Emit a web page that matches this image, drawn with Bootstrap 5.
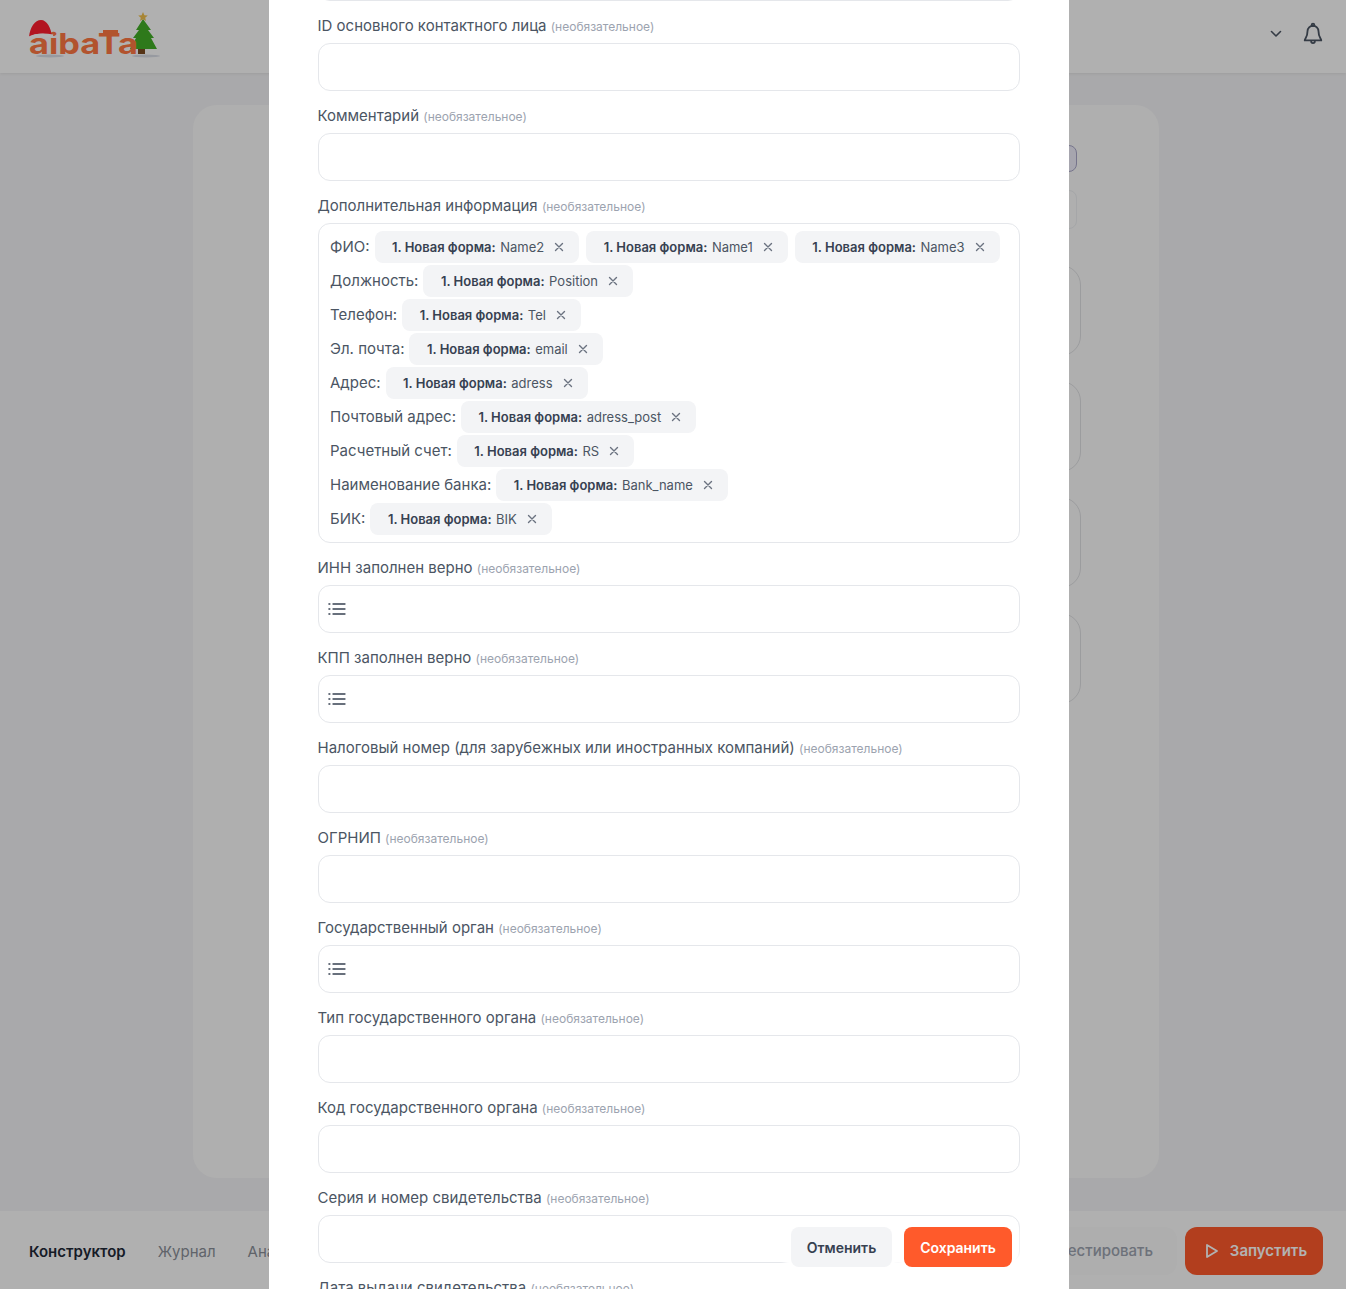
<!DOCTYPE html>
<html lang="ru">
<head>
    <meta charset="UTF-8">
    <meta name="viewport" content="width=device-width, initial-scale=1">
    <title>Albato</title>
    <link href="https://cdn.jsdelivr.net/npm/bootstrap@5.3.0/dist/css/bootstrap.min.css" rel="stylesheet">
    <style>
        body { font-family: Inter, "Noto Sans", sans-serif; background: #f3f3f5; overflow: hidden; }
        .app-shell { height: 100vh; }
        .top-bar { height: 73px; flex: none; background: #fdfdfd; padding: 0 22px 5px 28px; box-shadow: 0 1px 3px rgba(0,0,0,.08); }
        .logo-mark { margin-top: 2px; }
        .work-area { padding: 32px 187px 32px 193px; min-height: 0; }
        .work-panel { background: #fbfbfb; border-radius: 24px; padding: 40px 78px 0 0; }
        .side-col { width: 600px; }
        .side-tab { height: 27px; border-radius: 8px; border: 1px solid #a9a7c8; background: #eeecfa; margin-bottom: 18px; margin-right: 4px; }
        .side-input { height: 39px; border-radius: 8px; border: 1px solid #eceef1; margin-bottom: 36px; margin-right: 4px; }
        .side-card { height: 91px; border-radius: 20px; border: 1px solid #dfe0e3; margin-bottom: 25px; }
        .bottom-bar { height: 79px; flex: none; background: #fdfdfd; padding: 2px 23px 0 29px; border-top: 1px solid #f3f3f5; }
        .tab-list { padding-top: 2px; }
        .tab-item { font-size: 15px; color: #8a8f98; margin-right: 32px; }
        .tab-item.active-tab { color: #1f2937; font-weight: 600; }
        .test-btn { height: 48px; width: 200px; border-radius: 12px; background: #f9f9f9; border: 0; color: #9ca3af; font-size: 15px; font-weight: 500; text-align: right; padding-right: 24px; }
        .run-btn { height: 48px; width: 138px; border-radius: 12px; background: #ff5a2b; border: 0; color: #fff; font-size: 15px; font-weight: 600; gap: 11px; padding: 0 0 0 4px; }
        .dim-layer { position: fixed; inset: 0; background: rgba(0,0,0,.3); }
        .modal-sheet { position: fixed; top: 0; bottom: 0; left: 269px; width: 800px; background: #fff; padding: 0 49px 0 49px; overflow: hidden; }
        .field-row { margin-bottom: 13px; }
        .field-row:first-child { margin-top: -47px; }
        .field-label { display: block; height: 24px; font-size: 15px; line-height: 24px; margin: 0 0 5px -.5px; color: #4b5563; }
        .field-label small { font-size: 12px; color: #9ca3af; }
        .field-box { height: 48px; border: 1px solid #e5e7eb; border-radius: 12px; padding: 0 9px; display: flex; align-items: center; }
        .field-box.field-tags { height: 320px; display: block; padding: 6px 11px; }
        .tag-line { display: flex; flex-wrap: wrap; align-items: center; height: 34px; padding-top: 1px; font-size: 15px; color: #4b5563; }
        .tag-chip { display: inline-flex; align-items: center; height: 32px; margin-top: -1px; padding: 1px 15px 0 17.500px; border-radius: 8px; background: #f3f4f6; margin-left: 5px; margin-right: 2px; font-size: 13px; color: #4b5563; }
        .tag-chip b { font-weight: 600; color: #374151; margin-right: 4.500px; }
        .tag-chip svg { margin-left: 10px; margin-top: -1px; }
        .sheet-actions { position: absolute; right: 57px; bottom: 22px; gap: 12px; }
        .sheet-actions .btn { height: 40px; border-radius: 8px; border: 0; font-size: 14px; font-weight: 600; box-shadow: 0 0 5px 7px #fff; }
        .btn-cancel { width: 101px; background: #f3f4f6; color: #374151; }
        .btn-save { width: 108px; background: #ff5a2b; color: #fff; }
        .btn-cancel:hover { background: #f3f4f6; color: #374151; }
        .btn-save:hover { background: #ff5a2b; color: #fff; }
    </style>
</head>
<body>
    <div class="app-shell d-flex flex-column">
        <header class="top-bar d-flex align-items-center justify-content-between">
            <svg class="logo-mark" width="132" height="50" viewBox="0 0 132 50" role="img" aria-label="albato">
                <ellipse cx="22" cy="46" rx="14" ry="1.500" fill="#d8dde6"/>
                <ellipse cx="118" cy="46" rx="14" ry="1.500" fill="#d8dde6"/>
                <rect x="110" y="38" width="7" height="6" fill="#7a4a20"/>
                <path d="M115 9l8 11h-3l6 8h-3l6 11h-27l6-11h-3l6-8h-3z" fill="#42ae28"/>
                <path d="M115 2l1.400 3.200 3.400.3-2.600 2.200.8 3.300-3-1.800-3 1.800.8-3.300-2.600-2.200 3.400-.3z" fill="#f0bf4c"/>
                <text x="1" y="44" font-family="Inter, sans-serif" font-weight="700" font-size="29" fill="#ff7743" textLength="109" lengthAdjust="spacingAndGlyphs">aibaTa</text>
                <rect x="75" y="20" width="15" height="3" fill="#ff7743"/>
                <path d="M1 27C2 17 7 10 13 10c6 0 10 8 11 16l-7-2c-6-1-11 0-16 3z" fill="#ff1e2e"/>
                <path d="M1 28c6-3 13-4 24-2" stroke="#fff" stroke-width="3" fill="none"/>
            </svg>
            <div class="d-flex align-items-center">
                <svg width="12" height="8" viewBox="0 0 12 8" fill="none" stroke="#4b5563" stroke-width="1.600" stroke-linecap="round" stroke-linejoin="round" class="me-3"><path d="M1.500 1.500L6 6l4.500-4.500"/></svg>
                <svg width="22" height="24" viewBox="0 0 24 26" fill="none" stroke="#4b5563" stroke-width="2" stroke-linecap="round" stroke-linejoin="round" class="ms-1"><path d="M6 10a6 6 0 0 1 12 0c0 7 3 8 3 10H3c0-2 3-3 3-10z"/><path d="M10 21a2 2 0 0 0 4 0"/><circle cx="12" cy="3" r="1.400"/></svg>
            </div>
        </header>
        <main class="work-area flex-grow-1 d-flex">
            <div class="work-panel flex-grow-1 d-flex justify-content-end">
                <div class="side-col">
                    <div class="side-tab"></div>
                    <div class="side-input"></div>
                    <div class="side-card"></div>
                    <div class="side-card"></div>
                    <div class="side-card"></div>
                    <div class="side-card"></div>
                </div>
            </div>
        </main>
        <footer class="bottom-bar d-flex align-items-center justify-content-between">
            <div class="tab-list d-flex">
                <span class="tab-item active-tab">Конструктор</span>
                <span class="tab-item">Журнал</span>
                <span class="tab-item">Аналитика</span>
            </div>
            <div class="d-flex gap-2">
                <button class="test-btn" type="button">Протестировать</button>
                <button class="run-btn d-flex align-items-center justify-content-center" type="button">
                    <svg width="14" height="16" viewBox="0 0 14 16" fill="none" stroke="#fff" stroke-width="1.800" stroke-linejoin="round"><path d="M2 2l10 6-10 6z"/></svg>
                    Запустить
                </button>
            </div>
        </footer>
    </div>

    <div class="dim-layer"></div>

    <div class="modal-sheet" id="sheet">
        <div class="sheet-actions d-flex">
            <button class="btn btn-cancel" type="button">Отменить</button>
            <button class="btn btn-save" type="button">Сохранить</button>
        </div>
    </div>

    <script>
        // одно поле формы: обычное, со списком или с тегами
        const OPT = "(необязательное)";
        const listIcon = `<svg width="18" height="14" viewBox="0 0 18 14" fill="none" stroke="#374151" stroke-width="1.300" stroke-linecap="round"><path d="M5 2h12M5 7h12M5 12h12"/><path d="M1 2h.8M1 7h.8M1 12h.8" stroke-width="1.600"/></svg>`;
        const crossIcon = `<svg width="10" height="10" viewBox="0 0 10 10" fill="none" stroke="#6b7280" stroke-width="1.400" stroke-linecap="round"><path d="M1.500 1.500l7 7M8.500 1.500l-7 7"/></svg>`;

        const tagLines = [
            ["ФИО:", ["Name2", "Name1", "Name3"]],
            ["Должность:", ["Position"]],
            ["Телефон:", ["Tel"]],
            ["Эл. почта:", ["email"]],
            ["Адрес:", ["adress"]],
            ["Почтовый адрес:", ["adress_post"]],
            ["Расчетный счет:", ["RS"]],
            ["Наименование банка:", ["Bank_name"]],
            ["БИК:", ["BIK"]]
        ];

        const fields = [
            { title: "", hidden: true },
            { title: "ID основного контактного лица" },
            { title: "Комментарий" },
            { title: "Дополнительная информация", tags: true },
            { title: "ИНН заполнен верно", list: true },
            { title: "КПП заполнен верно", list: true },
            { title: "Налоговый номер (для зарубежных или иностранных компаний)" },
            { title: "ОГРНИП" },
            { title: "Государственный орган", list: true },
            { title: "Тип государственного органа" },
            { title: "Код государственного органа" },
            { title: "Серия и номер свидетельства" },
            { title: "Дата выдачи свидетельства" }
        ];

        function chip(name) {
            return `<span class="tag-chip"><b>1. Новая форма:</b> ${name} ${crossIcon}</span>`;
        }

        let html = "";
        fields.forEach(f => {
            let inner = "";
            if (f.tags) {
                inner = tagLines.map(l => `<div class="tag-line">${l[0]}${l[1].map(chip).join("")}</div>`).join("");
            } else if (f.list) {
                inner = listIcon;
            }
            html += `<div class="field-row">
                ${f.hidden ? "" : `<label class="field-label">${f.title} <small>${OPT}</small></label>`}
                <div class="field-box ${f.tags ? "field-tags" : ""}">${inner}</div>
            </div>`;
        });
        document.getElementById("sheet").insertAdjacentHTML("afterbegin", html);
    </script>
    <script src="https://cdn.jsdelivr.net/npm/bootstrap@5.3.0/dist/js/bootstrap.bundle.min.js"></script>
</body>
</html>
